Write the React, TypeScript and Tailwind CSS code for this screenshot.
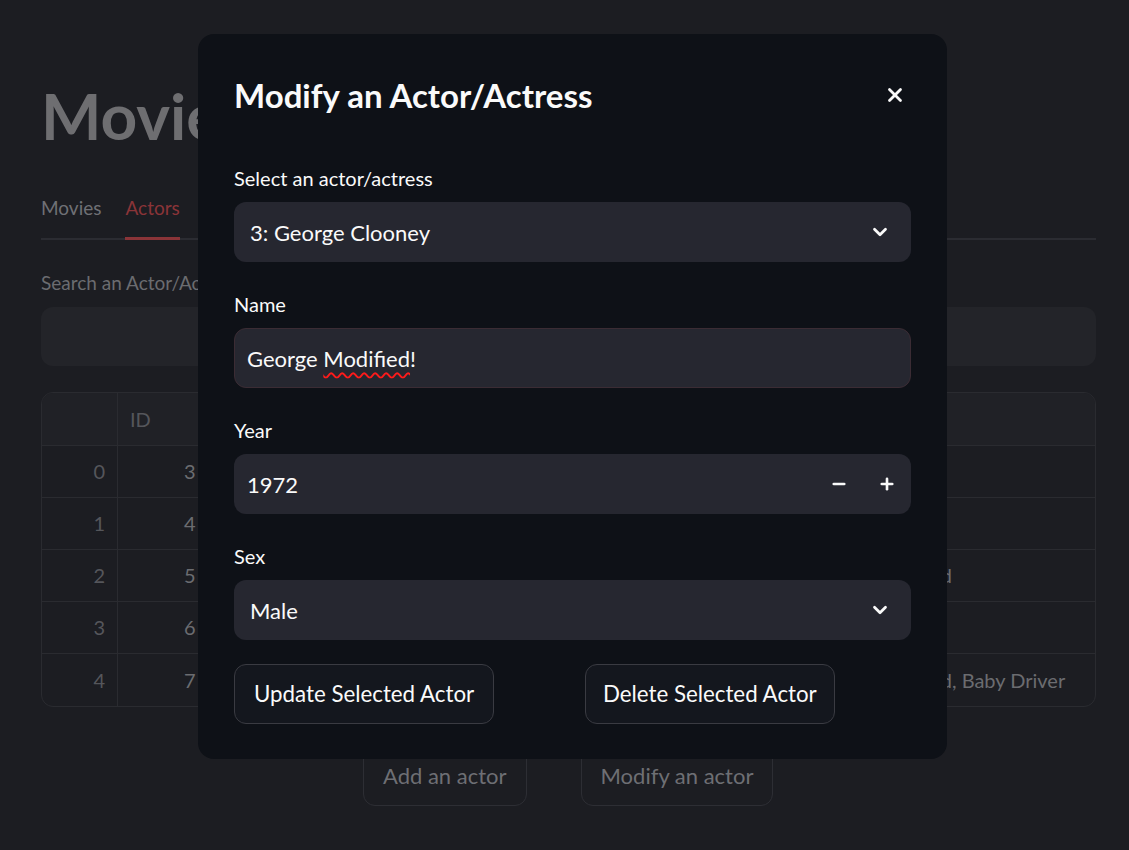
import { X, ChevronDown, Minus, Plus } from "lucide-react";

const rows = [
  { idx: 0, id: 3, films: "Ocean's Eleven" },
  { idx: 1, id: 4, films: "The Matrix" },
  { idx: 2, id: 5, films: "Once Upon a Time in Hollywood" },
  { idx: 3, id: 6, films: "Titanic" },
  { idx: 4, id: 7, films: "Once Upon a Time in Hollywood, Baby Driver" },
];

function Field({ label, children }: { label: string; children: React.ReactNode }) {
  return (
    <div className="flex flex-col">
      <div className="mt-[6px] mb-3 h-6 leading-6 text-[20px] text-[#fafafa]">{label}</div>
      {children}
    </div>
  );
}

export default function App() {
  return (
    <div
      className="relative w-[1129px] h-[850px] overflow-hidden bg-[#1c1d22]"
      style={{ fontFamily: "Lato, 'Liberation Sans', sans-serif" }}
    >
      {/* dimmed page behind the dialog */}
      <div className="pl-[41px] pr-[33px] pt-[78px] text-[#6b6c70]">
        <h1 className="text-[64px] font-bold leading-[76px] text-[#6e6e71]">Movies</h1>

        <div className="mt-[40px] flex gap-6 text-[19px] border-b-2 border-[#2b2c32]">
          <div className="pb-[14px] text-[#6f7075]">Movies</div>
          <div className="pb-[14px] text-[#8a3438] border-b-[3px] border-[#8a3438] -mb-[2px]">Actors</div>
        </div>

        <div className="mt-[31px] text-[19px] leading-6">Search an Actor/Actress</div>
        <div className="mt-3 h-[59px] rounded-xl bg-[#232429]" />

        <div className="mt-[26px] rounded-xl border border-[#2a2b30] overflow-hidden text-[20px]">
          <div className="grid grid-cols-[76px_160px_1fr] h-[53px] bg-[#202126] border-b border-[#2a2b30]">
            <div className="border-r border-[#2a2b30]" />
            <div className="flex items-center pl-3 text-[#55565b]">ID</div>
            <div className="flex items-center pl-[389px] text-[#55565b]">Movies</div>
          </div>
          {rows.map((r, i) => (
            <div
              key={r.idx}
              className={`grid grid-cols-[76px_160px_1fr] h-[52px] ${i < rows.length - 1 ? "border-b border-[#2a2b30]" : ""}`}
            >
              <div className="flex items-center justify-end pr-[12px] border-r border-[#2a2b30] text-[#55565b]">{r.idx}</div>
              <div className="flex items-center pl-[66px] text-[#6b6c70]">{r.id}</div>
              <div className="flex items-center pl-[389px] whitespace-nowrap text-[#6b6c70]">{r.films}</div>
            </div>
          ))}
        </div>

        <div className="mt-[38px] flex gap-[54px] pl-[322px]">
          <div className="h-[61px] px-[19px] flex items-center rounded-xl border border-[#2d2e34] text-[22px] text-[#6e6f74]">Add an actor</div>
          <div className="h-[61px] px-[19px] flex items-center rounded-xl border border-[#2d2e34] text-[22px] text-[#6e6f74]">Modify an actor</div>
        </div>
      </div>

      {/* dialog */}
      <div className="absolute left-[198px] top-[34px] w-[749px] h-[725px] rounded-2xl bg-[#0e1117] px-[36px] pt-[34px] text-[#fafafa]">
        <div className="flex items-center justify-between h-[54px]">
          <h2 className="text-[33px] font-bold leading-[54px]">Modify an Actor/Actress</h2>
          <X className="w-[22px] h-[22px] mr-[5px]" strokeWidth={3} />
        </div>

        <div className="mt-[38px] flex flex-col gap-6">
          <Field label="Select an actor/actress">
            <div className="h-[60px] rounded-xl bg-[#262730] flex items-center justify-between pl-4 pr-[20px] text-[22px]">
              <span>3: George Clooney</span>
              <ChevronDown className="w-[22px] h-[22px]" strokeWidth={3} />
            </div>
          </Field>

          <Field label="Name">
            <div className="h-[60px] rounded-xl bg-[#262730] border border-[#3b2c34] flex items-center pl-[12px] text-[22px]">
              <span>
                George{" "}
                <span className="underline decoration-wavy decoration-[#ff1a1a] decoration-[1.5px] underline-offset-[5px]">Modified</span>!
              </span>
            </div>
          </Field>

          <Field label="Year">
            <div className="h-[60px] rounded-xl bg-[#262730] flex items-center text-[22px]">
              <span className="flex-1 pl-[13px]">1972</span>
              <div className="w-[48px] h-full flex items-center justify-center">
                <Minus className="w-[18px] h-[18px]" strokeWidth={3.5} />
              </div>
              <div className="w-[48px] h-full flex items-center justify-center">
                <Plus className="w-[18px] h-[18px]" strokeWidth={3.5} />
              </div>
            </div>
          </Field>

          <Field label="Sex">
            <div className="h-[60px] rounded-xl bg-[#262730] flex items-center justify-between pl-4 pr-[20px] text-[22px]">
              <span>Male</span>
              <ChevronDown className="w-[22px] h-[22px]" strokeWidth={3} />
            </div>
          </Field>

          <div className="grid grid-cols-2 gap-[25px]">
            <div>
              <div className="inline-flex h-[60px] items-center rounded-xl border border-[#3a3b42] bg-[#14171e] px-[19px] text-[22.3px]">
                Update Selected Actor
              </div>
            </div>
            <div>
              <div className="inline-flex h-[60px] items-center rounded-xl border border-[#3a3b42] bg-[#14171e] px-[17px] text-[22.3px]">
                Delete Selected Actor
              </div>
            </div>
          </div>
        </div>
      </div>
    </div>
  );
}
